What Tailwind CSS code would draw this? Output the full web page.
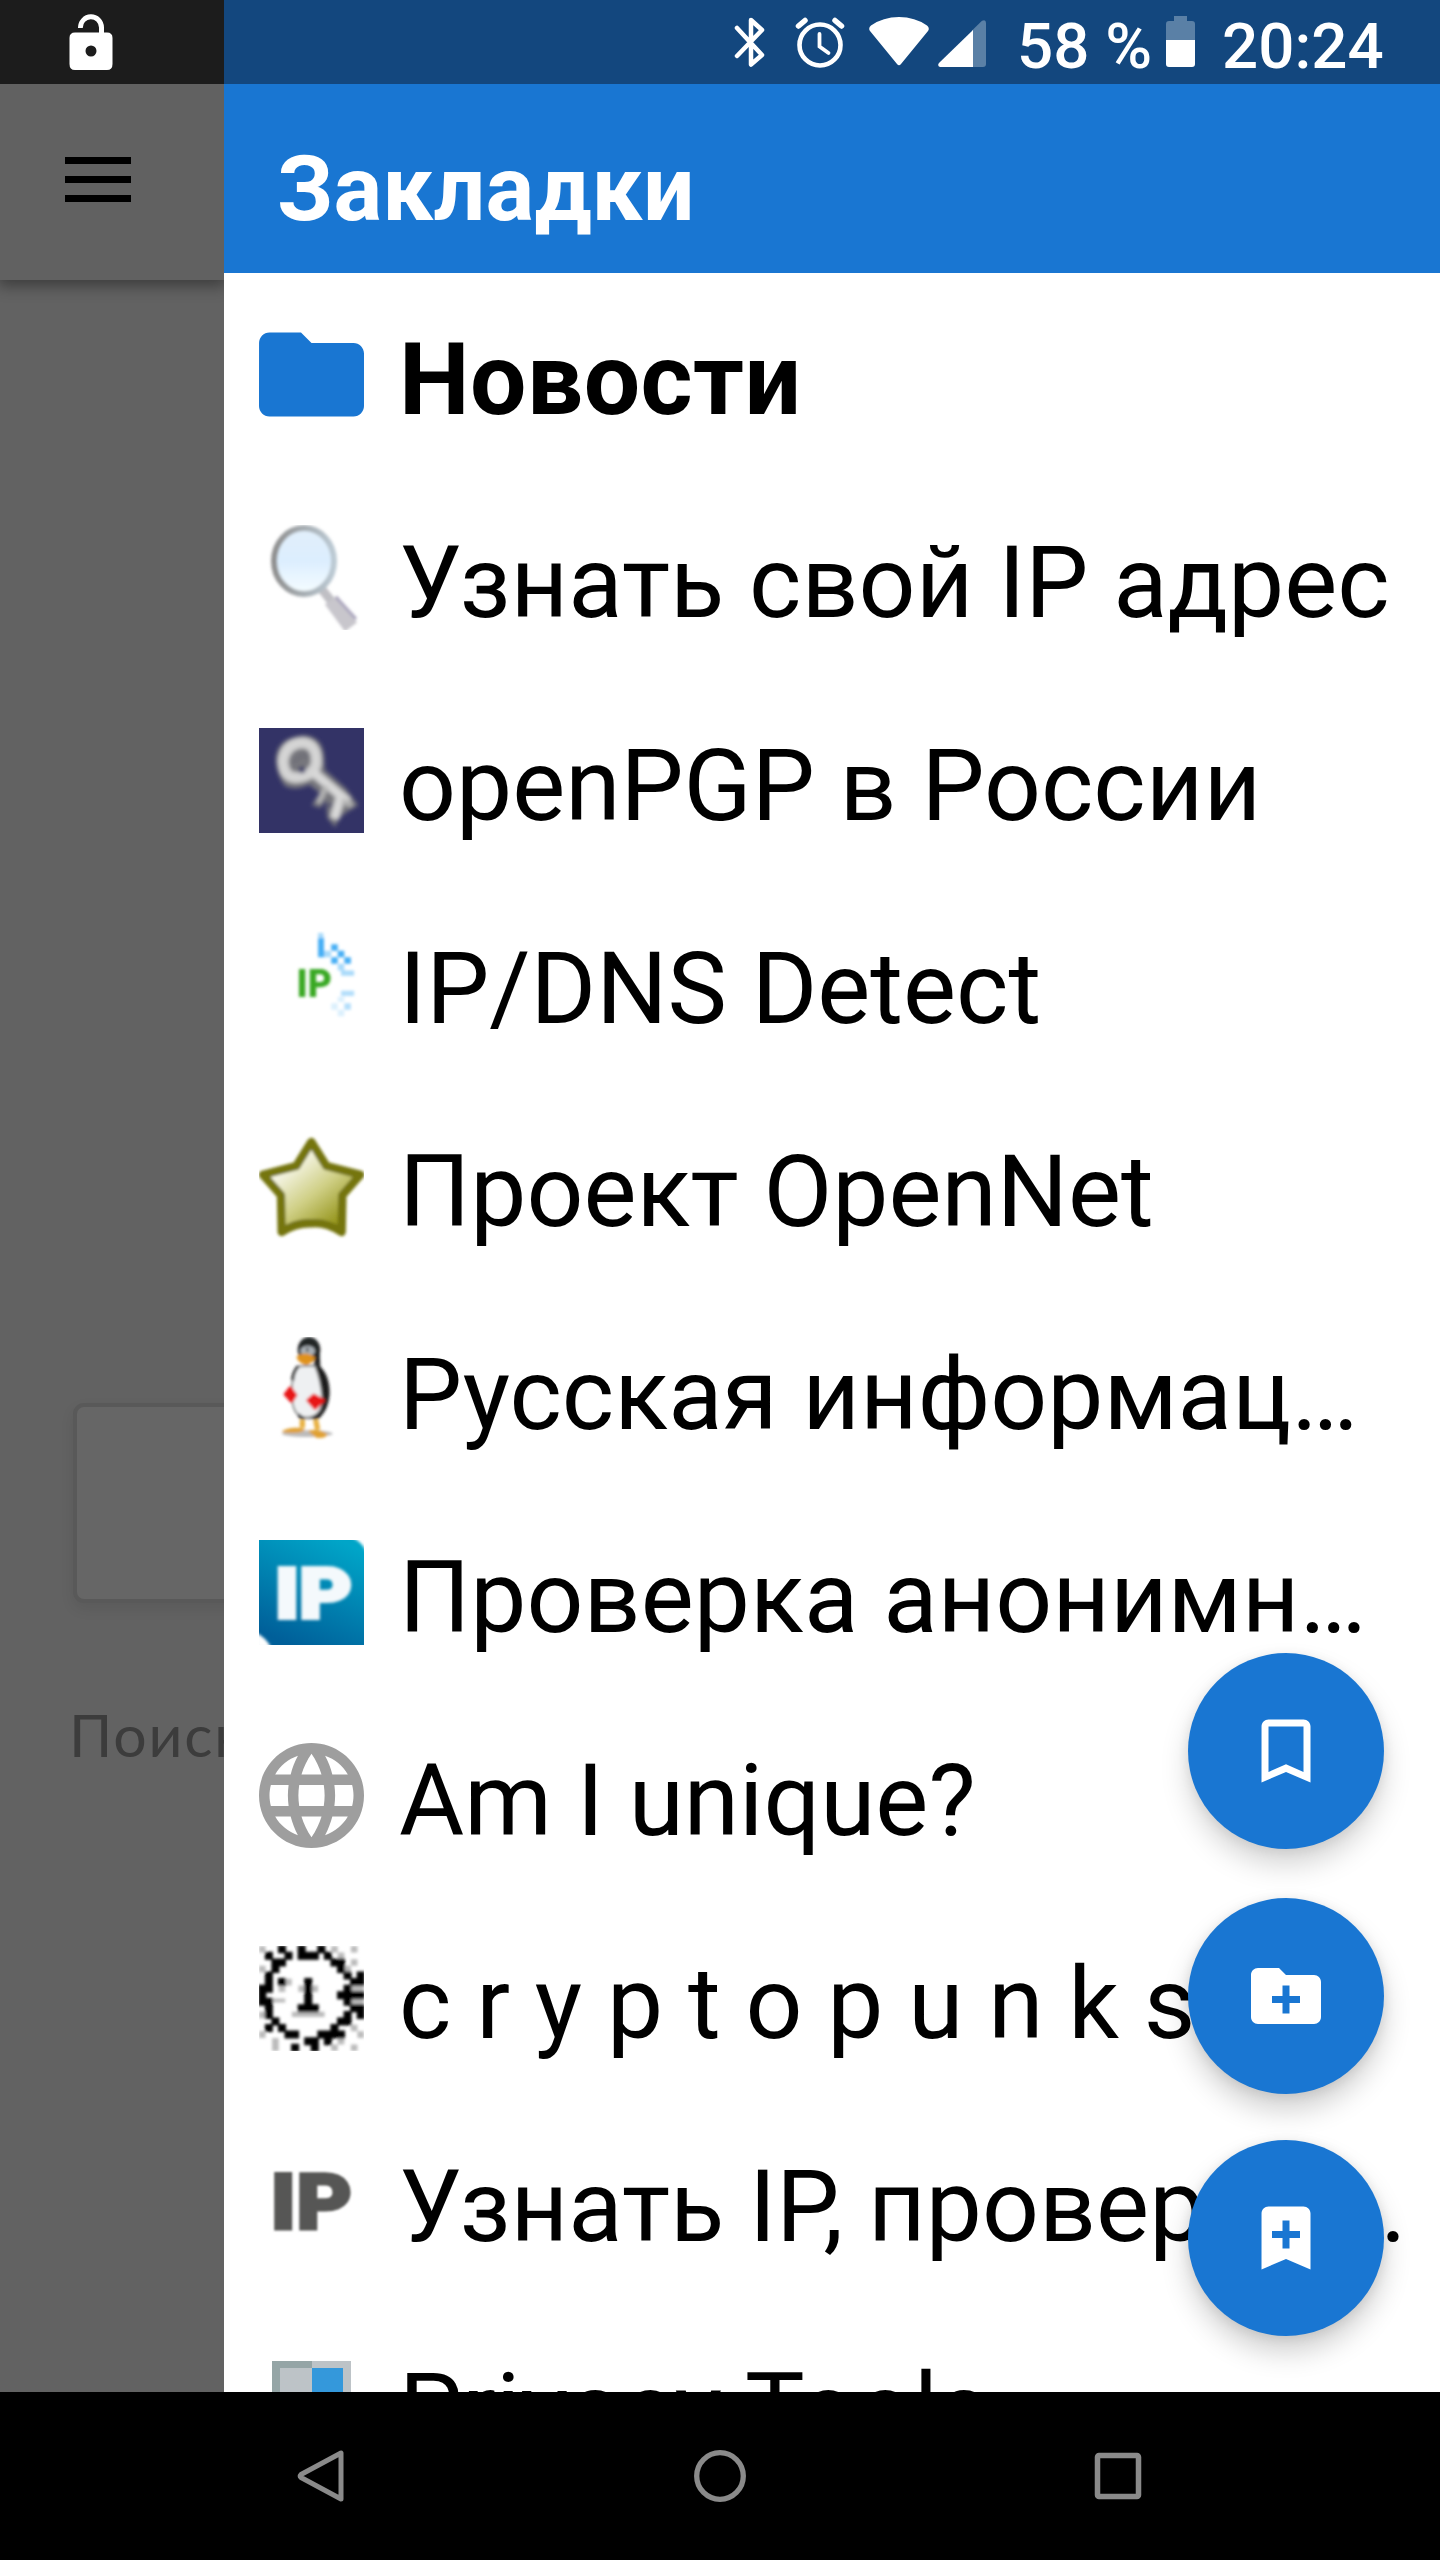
<!DOCTYPE html>
<html lang="ru">
<head>
<meta charset="utf-8">
<title>Закладки</title>
<script src="https://cdn.jsdelivr.net/npm/@tailwindcss/browser@4"></script>
</head>
<body class="relative flex h-[2560px] w-[1440px] flex-col overflow-hidden bg-black font-['Roboto',sans-serif]">

<!-- status bar -->
<header class="flex h-[84px] shrink-0 text-white">
  <div class="flex w-[224px] bg-[#1c1c1c] pl-[69px] pt-[14px]">
    <svg class="h-[56px] w-[44px]" viewBox="0 0 44 56"><path fill="#fff" fill-rule="evenodd" d="M6 18.500H30V13.500A8 8.500 0 0 0 13.800 14H9A13 13.500 0 0 1 35 13.500V18.500H38Q43.500 18.500 43.500 24V50Q43.500 56 38 56H6Q.5 56 .5 50V24Q.5 18.500 6 18.500ZM22 31.500A5.500 5.500 0 1 0 22 42.500A5.500 5.500 0 1 0 22 31.500Z"/></svg>
  </div>
  <div class="flex flex-1 bg-[#13477e] pl-[509px]">
    <svg class="mt-[16px] h-[52px] w-[34px] shrink-0" viewBox="0 0 34 52" fill="none" stroke="#fff" stroke-width="4.500" stroke-linejoin="round" stroke-linecap="round"><path d="M4 12L29 39L18 48.500V4L29 14L4 40"/></svg>
    <svg class="ml-[28px] mt-[16px] h-[52px] w-[50px] shrink-0" viewBox="0 0 50 52" fill="none" stroke="#fff" stroke-linecap="round"><circle cx="25" cy="29" r="20.500" stroke-width="4.600"/><path stroke-width="5.500" d="M3.500 10L10 4.500M46.500 10L40 4.500"/><path stroke-width="3.800" d="M24.500 18V30.500L33.500 37"/></svg>
    <svg class="ml-[24px] mt-[17px] h-[49px] w-[60px] shrink-0" viewBox="0 0 60 49"><path fill="#fff" d="M1 14Q-1 11 2 8.500Q14 0 30 0T58 8.500Q61 11 59 14L32 47Q30 49.500 28 47Z"/></svg>
    <svg class="ml-[9px] mt-[20px] h-[47px] w-[48px] shrink-0" viewBox="0 0 48 47"><path fill="#5a80a6" d="M34 10.500L44 .8Q48-1 48 3V44Q48 47 45 47H34Z"/><path fill="#fff" d="M35 10V47H2Q-1 46 1 43Z"/></svg>
    <span class="ml-[31px] mt-[9px] w-[149px] shrink-0 whitespace-nowrap text-[63.700px] font-medium leading-[75px]">58 %</span>
    <svg class="mt-[16px] h-[51px] w-[29px] shrink-0" viewBox="0 0 29 51"><path fill="#5a80a6" d="M8 0H21V5H26Q29 5 29 8V24H0V8Q0 5 3 5H8Z"/><path fill="#fff" d="M0 24H29V48Q29 51 26 51H3Q0 51 0 48Z"/></svg>
    <span class="ml-[27px] mt-[9px] whitespace-nowrap text-[63.700px] font-medium leading-[75px]">20:24</span>
  </div>
</header>

<main class="flex h-[2308px] shrink-0">
  <!-- dimmed page under the drawer -->
  <section class="flex w-[224px] shrink-0 flex-col overflow-hidden bg-[#626262]">
    <div class="h-[196px] shrink-0 bg-[#616161] pl-[65px] pt-[73px] shadow-[0_4px_14px_2px_rgba(0,0,0,0.38)]">
      <div class="flex w-[66px] flex-col gap-[12px]">
        <div class="h-[7px] bg-black"></div><div class="h-[7px] bg-black"></div><div class="h-[7px] bg-black"></div>
      </div>
    </div>
    <div class="ml-[73px] mt-[1123px] h-[200px] w-[400px] shrink-0 rounded-[11px] border-4 border-[#595959] bg-[#666] shadow-[0_6px_14px_rgba(0,0,0,0.08)]"></div>
    <p class="ml-[69px] mt-[96px] whitespace-nowrap font-['Lato',sans-serif] text-[59px] leading-[72px] tracking-[1.800px] text-[#3c3c3c]">Поиск</p>
  </section>

  <!-- bookmarks drawer -->
  <aside class="flex flex-1 flex-col overflow-hidden bg-white">
    <h1 class="flex h-[189px] shrink-0 items-center bg-[#1976d2] pl-[53px] pt-[21px] text-[91px] font-bold leading-none tracking-[0.200px] text-white">Закладки</h1>
    <ul class="flex flex-col text-[100px] leading-none text-black">
      <li class="flex h-[203px] shrink-0 items-center gap-[35px] pl-[35px]">
        <svg class="size-[105px] shrink-0" viewBox="2 2 20 20"><path fill="#1976d2" d="M10 4H4c-1.100 0-1.990.9-1.990 2L2 18c0 1.100.9 2 2 2h16c1.100 0 2-.9 2-2V8c0-1.100-.9-2-2-2h-8l-2-2z"/></svg>
        <span class="whitespace-nowrap pt-[11px] font-bold tracking-[0.400px]">Новости</span>
      </li>
      <li class="flex h-[203px] shrink-0 items-center gap-[35px] pl-[35px]">
        <svg class="size-[105px] shrink-0" viewBox="0 0 105 105">
          <defs><linearGradient id="lens" x1="0" y1="0" x2="0" y2="1"><stop offset="0" stop-color="#e2effb"/><stop offset=".5" stop-color="#dceefe"/><stop offset="1" stop-color="#f6fdff"/></linearGradient>
          <linearGradient id="rim" x1="0" y1="0" x2="1" y2="0"><stop offset="0" stop-color="#8f8f8f"/><stop offset="1" stop-color="#bccad4"/></linearGradient>
          <filter id="soft"><feGaussianBlur stdDeviation="1.800"/></filter></defs>
          <g filter="url(#soft)"><path stroke="#c0bfc4" stroke-width="9" d="M61 62L73 77"/><path stroke="#c8c6cc" stroke-width="15" d="M72 75L92 102"/><path stroke="#aaa5bd" stroke-width="3" d="M77 72L97 94"/><ellipse cx="45" cy="36" rx="30" ry="33" fill="url(#lens)" stroke="url(#rim)" stroke-width="6"/></g>
        </svg>
        <span class="whitespace-nowrap pt-[11px]">Узнать свой IP адрес</span>
      </li>
      <li class="flex h-[203px] shrink-0 items-center gap-[35px] pl-[35px]">
        <svg class="size-[105px] shrink-0 bg-[#333366]" viewBox="0 0 315 315">
          <defs><filter id="keysoft"><feGaussianBlur stdDeviation="7"/></filter></defs>
          <g filter="url(#keysoft)" fill="none"><path fill="#77777d" d="M50 90Q55 30 130 22Q190 22 196 85L198 125L262 182Q282 210 298 232L268 250Q240 265 228 298L205 270L200 215L185 240L158 232L182 195L150 170Q110 190 78 175Q50 140 50 90Z"/><path stroke="#d4d4d4" stroke-width="32" d="M72 100Q78 48 130 44Q175 48 172 105Q168 135 130 146Q75 160 72 100Z"/><path stroke="#d8d8d8" stroke-width="27" d="M162 132L268 222M245 205L226 272"/><path stroke="#b5b5b5" stroke-width="16" d="M202 175L178 225M250 218L280 232"/><path stroke="#707078" stroke-width="14" d="M106 106Q112 82 150 84"/><circle cx="129" cy="126" r="10" fill="#333366"/><path stroke="#333366" stroke-width="14" d="M212 228L214 236"/></g>
        </svg>
        <span class="whitespace-nowrap pt-[11px]">openPGP в России</span>
      </li>
      <li class="flex h-[203px] shrink-0 items-center gap-[35px] pl-[35px]">
        <svg class="size-[105px] shrink-0" viewBox="0 0 16 16">
          <defs><filter id="px"><feGaussianBlur stdDeviation=".27"/></filter></defs>
          <g filter="url(#px)"><text x="5.700" y="10.100" font-family="Roboto" font-weight="900" font-size="6" textLength="5.400" lengthAdjust="spacingAndGlyphs" fill="#39a820">IP</text>
          <path fill="#45aef5" d="M9 1h.9v2h-.9zM11 2h1v1h-1zM12 3h1v1h-1zM11 4h1v1h-1zM13 4h1v1h-1zM9 3h1v1h-1z"/><path fill="#a9dafa" d="M10 3h1v1h-1zM12.500 6h2v.8h-2zM12 5h1v1h-1zM9 .3h.8v.8h-.8z"/><path fill="#b3defb" d="M12.500 9.100h2v.8h-2zM13 11h1v1h-1z"/><path fill="#dbf0fd" d="M11 11h1v1h-1zM12 12h1v1h-1zM12 10h1v.8h-1z"/></g>
        </svg>
        <span class="whitespace-nowrap pt-[11px]">IP/DNS Detect</span>
      </li>
      <li class="flex h-[203px] shrink-0 items-center gap-[35px] pl-[35px]">
        <svg class="size-[105px] shrink-0" viewBox="0 0 315 315">
          <defs><linearGradient id="gold" x1=".2" y1=".2" x2=".85" y2=".95"><stop offset="0" stop-color="#fff"/><stop offset=".5" stop-color="#cfcf85"/><stop offset="1" stop-color="#868600"/></linearGradient><filter id="starsoft"><feGaussianBlur stdDeviation="4.500"/></filter></defs>
          <path filter="url(#starsoft)" fill="url(#gold)" stroke="#757510" stroke-width="25" stroke-linejoin="round" d="M157 24L202 96L304 122L250 184L248 294Q200 263 157 268Q110 266 68 294L66 184L12 122L112 96Z"/>
        </svg>
        <span class="whitespace-nowrap pt-[11px]">Проект OpenNet</span>
      </li>
      <li class="flex h-[203px] shrink-0 items-center gap-[35px] pl-[35px]">
        <svg class="size-[105px] shrink-0" viewBox="0 0 315 315">
          <defs><filter id="birdsoft"><feGaussianBlur stdDeviation="4"/></filter></defs>
          <g filter="url(#birdsoft)"><ellipse cx="145" cy="290" rx="76" ry="10" fill="#bbb"/><path fill="#1d1d1d" d="M165 75Q212 100 212 170Q210 215 180 245L120 245L160 160Z"/><path fill="#eef0f2" stroke="#777" stroke-width="5" d="M118 88Q98 115 98 165Q98 240 140 242Q190 240 190 185Q186 130 168 86Z"/><path stroke="#222" stroke-width="9" fill="none" d="M118 88Q102 105 101 130M118 232Q125 242 135 243M164 245Q178 240 184 228"/><ellipse cx="150" cy="38" rx="34" ry="38" fill="#242628"/><ellipse cx="146" cy="42" rx="22" ry="16" fill="#a9b0b6"/><path fill="#222" d="M165 60L182 45L184 88L172 92Z"/><path fill="#e0921a" d="M112 60Q138 38 170 62Q155 82 140 84Q118 78 112 60Z"/><path stroke="#444" stroke-width="6" d="M145 32V44"/><path fill="#e81218" stroke="#e81218" stroke-width="8" stroke-linejoin="round" d="M78 172L94 152L111 174L98 194ZM146 190L164 174L194 190L168 215Z"/><path stroke="#e8b040" stroke-width="16" d="M130 248V272M170 248L176 278"/><path fill="#e0a030" d="M70 282Q100 266 138 276Q134 292 70 286ZM146 282Q176 272 206 292Q200 306 172 302Z"/></g>
        </svg>
        <span class="whitespace-nowrap pt-[11px]">Русская информац…</span>
      </li>
      <li class="flex h-[203px] shrink-0 items-center gap-[35px] pl-[35px]">
        <svg class="size-[105px] shrink-0" viewBox="0 0 315 315">
          <defs><linearGradient id="sea" x1=".75" y1="0" x2=".3" y2="1"><stop offset="0" stop-color="#00a5c8"/><stop offset="1" stop-color="#005f99"/></linearGradient><filter id="ipsoft"><feGaussianBlur stdDeviation="4"/></filter></defs>
          <path fill="url(#sea)" d="M0 0H315V315H0Z"/><g filter="url(#ipsoft)"><path fill="#fff" d="M278-8H323V37Q310 6 278-8ZM-8 278Q20 292 37 323H-8Z"/><text x="47" y="233" font-family="Roboto" font-weight="900" font-size="212" textLength="232" lengthAdjust="spacingAndGlyphs" fill="#f4f9fc" stroke="#f4f9fc" stroke-width="12">IP</text></g>
        </svg>
        <span class="whitespace-nowrap pt-[11px]">Проверка анонимн…</span>
      </li>
      <li class="flex h-[203px] shrink-0 items-center gap-[35px] pl-[35px]">
        <svg class="size-[105px] shrink-0" viewBox="2 2 20 20"><path fill="#9e9e9e" d="M11.990 2C6.470 2 2 6.480 2 12s4.470 10 9.990 10C17.520 22 22 17.520 22 12S17.520 2 11.990 2zm6.930 6h-2.950c-.32-1.250-.78-2.450-1.380-3.560 1.840.63 3.370 1.910 4.330 3.560zM12 4.040c.83 1.200 1.480 2.530 1.910 3.960h-3.820c.43-1.430 1.080-2.760 1.910-3.960zM4.260 14C4.100 13.360 4 12.690 4 12s.1-1.360.26-2h3.380c-.08.66-.14 1.320-.14 2 0 .68.06 1.340.14 2H4.260zm.82 2h2.950c.32 1.250.78 2.450 1.380 3.560-1.840-.63-3.370-1.900-4.330-3.560zm2.950-8H5.080c.96-1.660 2.490-2.930 4.330-3.560C8.810 5.550 8.350 6.750 8.030 8zM12 19.960c-.83-1.200-1.480-2.530-1.910-3.960h3.820c-.43 1.430-1.080 2.760-1.910 3.960zM14.340 14H9.660c-.09-.66-.16-1.320-.16-2 0-.68.07-1.350.16-2h4.680c.09.65.16 1.320.16 2 0 .68-.07 1.340-.16 2zm.25 5.560c.6-1.110 1.060-2.310 1.380-3.560h2.950c-.96 1.650-2.490 2.930-4.330 3.560zM16.360 14c.08-.66.14-1.320.14-2 0-.68-.06-1.340-.14-2h3.380c.16.64.26 1.310.26 2s-.1 1.360-.26 2h-3.380z"/></svg>
        <span class="whitespace-nowrap pt-[11px]">Am I unique?</span>
      </li>
      <li class="flex h-[203px] shrink-0 items-center gap-[35px] pl-[35px]">
        <svg class="size-[105px] shrink-0 overflow-hidden" viewBox="0 0 16 16">
          <g filter="url(#px)"><path fill="#bbb" d="M0 0h1v1h-1zM11 0h1v1h-1zM14 0h1v1h-1zM12 1h1v1h-1zM14 2h1v1h-1zM0 3h1v1h-1zM13 3h1v1h-1zM6 6h3v1h-3zM3 6h1v1h-1zM4 5h1v1h-1zM2 8h2v.6h-2zM14 6h2v1h-2zM14 8h2v1h-2zM5 10h5v.8h-5zM0 10h1v1h-1zM0 13h1v1h-1zM2 14h1v2h-1zM12 14h1v1h-1zM11 15h1v1h-1zM14 15h1v1h-1zM15 13h1v1h-1zM14 12h1v1h-1z"/><path fill="#000" stroke="#000" stroke-width=".22" d="M3 0h1v1h-1zM6 0h1v1h-1zM9 0h1v1h-1zM1 1h1v1h-1zM4 1h1v1h-1zM6 1h3v1h-3zM10 1h1v1h-1zM2 2h2v1h-2zM11 2h2v1h-2zM2 3h1v1h-1zM12 3h1v1h-1zM1 4h1v1h-1zM13 4h1v1h-1zM15 4h1v1h-1zM1 5h1v1h-1zM3 5h1v1h-1zM7 5h1v4h-1zM14 5h2v1h-2zM0 6h2v1h-2zM13 6h1v1h-1zM0 7h1v1h-1zM12 7h4v1h-4zM0 8h2v1h-2zM13 8h1v1h-1zM1 9h1v1h-1zM6 9h3v1h-3zM14 9h2v1h-2zM1 10h1v1h-1zM13 10h1v1h-1zM15 10h1v1h-1zM2 11h1v1h-1zM12 11h2v1h-2zM1 12h1v1h-1zM3 12h1v1h-1zM11 12h1v1h-1zM4 13h2v1h-2zM9 13h4v1h-4zM7 14h2v1h-2zM10 14h1v1h-1zM5 15h1v1h-1zM8 15h1v1h-1z"/></g>
        </svg>
        <span class="whitespace-nowrap pt-[11px]">c r y p t o p u n k s</span>
      </li>
      <li class="flex h-[203px] shrink-0 items-center gap-[35px] pl-[35px]">
        <svg class="size-[105px] shrink-0" viewBox="0 0 315 315"><defs><filter id="greysoft"><feGaussianBlur stdDeviation="2.500"/></filter></defs><text filter="url(#greysoft)" x="34" y="239" font-family="Roboto" font-weight="900" font-size="236" textLength="246" lengthAdjust="spacingAndGlyphs" fill="#575755" stroke="#575755" stroke-width="9">IP</text></svg>
        <span class="whitespace-nowrap pt-[11px]">Узнать IP, проверка …</span>
      </li>
      <li class="flex h-[203px] shrink-0 items-center gap-[35px] pl-[35px]">
        <svg class="size-[105px] shrink-0" viewBox="0 0 105 105"><path fill="#bdc3c7" d="M13 9H92V98H13Z"/><path fill="#95a5a6" d="M13 9H53V16H21V98H13Z"/><path fill="#3498db" d="M53 16H84V90H53Z"/></svg>
        <span class="whitespace-nowrap pt-[11px]">Privacy Tools</span>
      </li>
    </ul>
  </aside>
</main>

<!-- navigation bar -->
<nav class="flex h-[168px] shrink-0 items-center bg-black pl-[297px]">
  <svg class="h-[54px] w-[48px] shrink-0" viewBox="0 0 48 54"><path fill="none" stroke="#8a8a8a" stroke-width="5" stroke-linejoin="round" d="M44 4V50L4 28.500Q2.500 27 4 25.500Z"/></svg>
  <svg class="ml-[348px] size-[54px] shrink-0" viewBox="0 0 54 54"><circle cx="27" cy="27" r="23.300" fill="none" stroke="#8a8a8a" stroke-width="5.300"/></svg>
  <svg class="ml-[347px] size-[48px] shrink-0" viewBox="0 0 48 48"><rect x="3.500" y="3.500" width="41" height="41" rx="1.500" fill="none" stroke="#8a8a8a" stroke-width="5.500"/></svg>
</nav>

<!-- floating actions -->
<div class="absolute left-[1188px] top-[1653px] flex flex-col">
  <button class="flex size-[196px] items-center justify-center rounded-full bg-[#1976d2] shadow-[0_16px_28px_rgba(0,0,0,0.17),0_2px_12px_rgba(0,0,0,0.08)]"><svg class="size-[84px]" viewBox="0 0 24 24"><path fill="#fff" d="M17 3H7c-1.100 0-1.990.9-1.990 2L5 21l7-3 7 3V5c0-1.100-.9-2-2-2zm0 15l-5-2.180L7 18V5h10v13z"/></svg></button>
  <button class="mt-[49px] flex size-[196px] items-center justify-center rounded-full bg-[#1976d2] shadow-[0_16px_28px_rgba(0,0,0,0.19),0_2px_12px_rgba(0,0,0,0.09)]"><svg class="size-[84px]" viewBox="0 0 24 24"><path fill="#fff" fill-rule="evenodd" d="M20 6h-8l-2-2H4C2.900 4 2 4.900 2 6v12c0 1.100.9 2 2 2h16c1.100 0 2-.9 2-2V8c0-1.100-.9-2-2-2zM16 14H13V17H11V14H8V12H11V9H13V12H16Z"/></svg></button>
  <button class="mt-[46px] flex size-[196px] items-center justify-center rounded-full bg-[#1976d2] shadow-[0_16px_28px_rgba(0,0,0,0.19),0_2px_12px_rgba(0,0,0,0.09)]"><svg class="size-[84px]" viewBox="0 0 24 24"><path fill="#fff" fill-rule="evenodd" d="M17 3H7c-1.100 0-1.990.9-1.990 2L5 21l7-3 7 3V5c0-1.100-.9-2-2-2zM16 12H13V15H11V12H8V10H11V7H13V10H16Z"/></svg></button>
</div>
</body>
</html>
